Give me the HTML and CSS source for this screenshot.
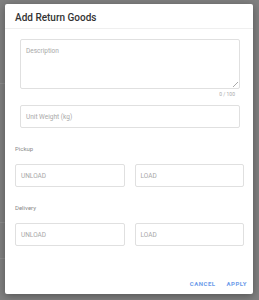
FILE: index.html
```
<!DOCTYPE html>
<html lang="en">
<head>
    <meta charset="UTF-8">
    <title>Add Return Goods</title>
    <link rel="stylesheet" href="styles.css">
</head>
<body>
    <div class="backdrop">
        <div class="line line-a"></div>
        <div class="line line-b"></div>
        <div class="line line-c"></div>
    </div>
    <div class="dialog">
        <div class="dialog-title">Add Return Goods</div>
        <div class="dialog-body">
            <div class="inner">
                <div class="field area">Description<span class="grip"></span></div>
                <div class="counter">0 / 100</div>
                <div class="field">Unit Weight (kg)</div>
            </div>
            <p class="section">Pickup</p>
            <div class="pair">
                <div class="field">UNLOAD</div>
                <div class="field">LOAD</div>
            </div>
            <p class="section">Delivery</p>
            <div class="pair">
                <div class="field">UNLOAD</div>
                <div class="field">LOAD</div>
            </div>
        </div>
        <div class="actions">
            <span class="btn">CANCEL</span>
            <span class="btn">APPLY</span>
        </div>
    </div>
</body>
</html>
```

FILE: styles.css
```
body {
    margin: 0;
    width: 259px;
    height: 300px;
    background-color: #808080;
    font-family: Roboto, "Liberation Sans", sans-serif;
    overflow: hidden;
    padding: 4px 6px 0 5px;
    box-sizing: border-box;
}

.backdrop {
    position: absolute;
    inset: 0;
}

.line {
    position: absolute;
    left: 0;
    width: 5px;
    height: 1px;
    background-color: #8c8c8c;
}

.line-a { top: 83px; }
.line-b { top: 222px; }
.line-c { top: 258px; }

.dialog {
    position: relative;
    background-color: #fff;
    border-radius: 2px;
    box-shadow: 0 2px 8px rgba(0, 0, 0, 0.35);
    height: 290px;
    display: flex;
    flex-direction: column;
}

.dialog-title {
    box-sizing: border-box;
    font-size: 10px;
    font-weight: 500;
    color: #333;
    padding: 8px 10px 0;
    height: 25px;
    border-bottom: 1px solid #efefef;
}

.dialog-body {
    padding: 10px 9px 0 10px;
    flex: 1;
}

.inner {
    padding: 0 4px 0 5px;
}

.field {
    box-sizing: border-box;
    height: 23px;
    border: 1px solid #e0e0e0;
    border-radius: 2px;
    font-size: 6.5px;
    color: #a8a8a8;
    padding: 0 5px;
    display: flex;
    align-items: center;
}

.area {
    position: relative;
    height: 50px;
    align-items: flex-start;
    padding-top: 7px;
}

.grip {
    position: absolute;
    right: 1px;
    bottom: 1px;
    width: 5px;
    height: 5px;
    background: linear-gradient(135deg, transparent 45%, #aaa 46%, #aaa 54%, transparent 55%, transparent 70%, #aaa 71%, #aaa 79%, transparent 80%);
}

.counter {
    text-align: right;
    font-size: 5px;
    color: #aaa;
    padding: 2px 5px 0 0;
    height: 16px;
    box-sizing: border-box;
}

.section {
    margin: 17px 0 12px;
    font-size: 6px;
    line-height: 7px;
    color: #8a8a8a;
}

.pair {
    display: grid;
    grid-template-columns: 1fr 1fr;
    gap: 10px;
}

.actions {
    display: flex;
    justify-content: flex-end;
    gap: 11px;
    padding: 0 6px 7px 0;
}

.btn {
    font-size: 6px;
    font-weight: 700;
    letter-spacing: 0.5px;
    color: #6b9bea;
}
```
